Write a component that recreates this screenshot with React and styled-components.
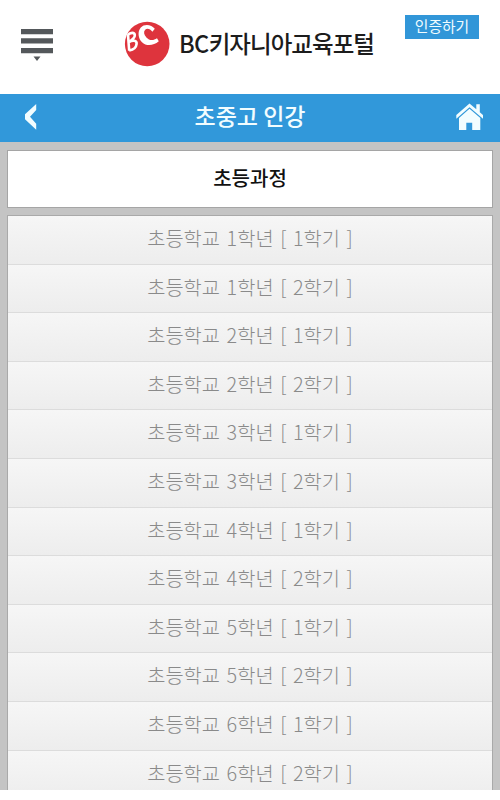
import React from 'react';

import styled, { createGlobalStyle } from 'styled-components';

const courses = [1, 2, 3, 4, 5, 6].flatMap((grade) => [1, 2].map((term) => ({ grade, term })));

export default function App() {
  return (
    <>
      <GlobalStyle />
      <Screen>
        <Header>
          <MenuButton aria-label="메뉴">
            <MenuIcon />
          </MenuButton>
          <Brand>
            <BrandIcon />
            <BrandName>
              <Latin>BC</Latin>키자니아교육포털
            </BrandName>
          </Brand>
          <VerifyButton>인증하기</VerifyButton>
        </Header>
        <TitleBar>
          <BarButton aria-label="뒤로">
            <BackIcon />
          </BarButton>
          <Title>초중고 인강</Title>
          <BarButton aria-label="홈">
            <HomeIcon />
          </BarButton>
        </TitleBar>
        <Content>
          <Category>초등과정</Category>
          <CourseList>
            {courses.map(({ grade, term }) => (
              <Course key={`${grade}-${term}`}>
                초등학교 {grade}학년 [ {term}학기 ]
              </Course>
            ))}
          </CourseList>
        </Content>
      </Screen>
    </>
  );
}

const MenuIcon = () => (
  <svg width="32" height="33" viewBox="0 0 32 33" fill="#54585b">
    <path d="M0 0h32v5.3H0zM0 9.3h32v5.3H0zM0 19h32v5.3H0zM12.5 27.5h7L16 32z" />
  </svg>
);

const BrandIcon = () => (
  <svg width="46" height="46" viewBox="0 0 46 46" fill="none">
    <circle cx="23.2" cy="23" r="22.3" fill="#de343d" />
    <path
      d="M4 13.8L5.2 29.6M3.6 14.2C6.4 11.2 10.6 11 10.8 14.2C11 17.2 7.6 19.4 4.8 21.2C8.6 18.8 13 19 12.6 22.8C12.2 26.6 9 28.8 5.2 29.6"
      stroke="#fff"
      strokeWidth="2.6"
      strokeLinejoin="round"
    />
    <path
      d="M30.8 7.8C27.5 3.2 20.2 2.6 16.8 6.4C13.2 10.6 14.2 17.4 18 21.2C22.4 25.4 29.4 24.8 34.8 20.2L33 17.2C29 20 25.2 19.4 22.4 16.4C19.8 13.6 19.4 10.6 21.2 8.8C23 7 26.2 7.8 28.4 10.8Z"
      fill="#fff"
    />
  </svg>
);

const BackIcon = () => (
  <svg width="12" height="26" viewBox="0 0 12 26" fill="#f2fdff">
    <path d="M11.2 0v6L5 12.7l6.2 7v6L0 15.2v-5z" />
  </svg>
);

const HomeIcon = () => (
  <svg width="28" height="28" viewBox="0 0 28 28" fill="#f2fdff">
    <path d="M13.5 0.5L20.3 6.2V1.3h3.5v8l3.2 2.8v3.6L13.5 4.2L0.3 15.7v-3.6z" />
    <path d="M13.5 5.8L24.3 15V27h-8.1v-7.2h-5.9V27H3V15z" />
  </svg>
);

const GlobalStyle = createGlobalStyle`
  * {
    box-sizing: border-box;
  }
  body {
    margin: 0;
    background: #fff;
    font-family: 'Noto Sans CJK KR', sans-serif;
  }
  svg {
    display: block;
  }
`;

const Screen = styled.main`
  width: 500px;
  height: 790px;
  display: flex;
  flex-direction: column;
  overflow: hidden;
`;

const Header = styled.header`
  flex: none;
  height: 94px;
  display: flex;
  align-items: flex-start;
  padding-left: 21px;
`;

const Button = styled.button`
  border: 0;
  padding: 0;
  background: none;
  color: inherit;
  font-family: inherit;
`;

const MenuButton = styled(Button)`
  margin-top: 29px;
`;

const Brand = styled.div`
  display: flex;
  align-items: center;
  height: 46px;
  margin: 21px 0 0 71px;
`;

const BrandName = styled.span`
  width: 196px;
  margin-left: 9px;
  padding-bottom: 2px;
  color: #1c1c1c;
  font-size: 23.5px;
  font-weight: 500;
  line-height: 42px;
  letter-spacing: -0.95px;
  white-space: nowrap;
`;

const Latin = styled.span`
  letter-spacing: -0.6px;
`;

const VerifyButton = styled(Button)`
  width: 74px;
  height: 24px;
  margin: 15px 0 0 30px;
  padding-bottom: 2px;
  background: #3196d8;
  color: #f0fcff;
  font-size: 14.8px;
  line-height: 20px;
`;

const TitleBar = styled.div`
  flex: none;
  height: 48px;
  display: flex;
  align-items: center;
  justify-content: space-between;
  padding: 0 16px 2px 25px;
  background: #3198da;
  color: #f2fdff;
`;

const BarButton = styled(Button)`
  flex: none;
`;

const Title = styled.h1`
  flex: 1;
  margin: 0 0 0 7px;
  padding-bottom: 4px;
  font-size: 23px;
  font-weight: 500;
  line-height: 40px;
  text-align: center;
`;

const Content = styled.div`
  flex: 1;
  min-height: 0;
  padding: 8px 7px 0;
  background: #c4c4c4;
  text-align: center;
`;

const Category = styled.h2`
  height: 58px;
  margin: 0 0 7px;
  border: 1px solid #a5a5a5;
  background: #fff;
  color: #111;
  font-size: 20px;
  font-weight: 500;
  line-height: 54px;
`;

const CourseList = styled.ul`
  margin: 0;
  padding: 0;
  border: 1px solid #a9a9a9;
  list-style: none;
`;

const Course = styled.li`
  height: 48.6px;
  border-bottom: 1px solid #dcdcdc;
  background: linear-gradient(#f6f6f6, #ededed);
  color: #8a8a8a;
  font-size: 19.8px;
  font-weight: 300;
  line-height: 44px;
  word-spacing: 2.2px;
`;
